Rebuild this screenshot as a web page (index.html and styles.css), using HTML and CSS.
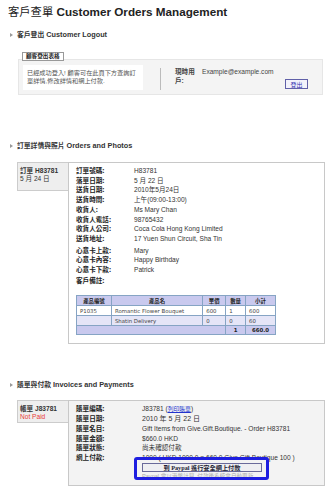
FILE: index.html
```html
<!DOCTYPE html>
<html lang="zh-Hant">
<head>
    <meta charset="UTF-8">
    <meta name="viewport" content="width=device-width, initial-scale=1.0">
    <title>客戶查單 Customer Orders Management</title>
    <link rel="stylesheet" href="styles.css">
</head>
<body>
    <h1 class="page-title"><span class="zh">客戶查單</span> Customer Orders Management</h1>

    <!-- Logout -->
    <h2 class="sec-head"><span class="zh">客戶登出</span> Customer Logout</h2>
    <div class="logout">
        <div class="logout-tab">顧客登出表格</div>
        <div class="logout-box">
            <p class="logout-msg">已經成功登入! 顧客可在此頁下方查詢訂單詳情,修改詳情和網上付款.</p>
            <div class="logout-user">
                <span class="user-label">現時用戶:</span>
                <span class="user-mail">Example@example.com</span>
                <button class="btn-logout">登出</button>
            </div>
        </div>
    </div>

    <!-- Orders -->
    <h2 class="sec-head sec-orders"><span class="zh">訂單詳情與照片</span> Orders and Photos</h2>
    <div class="record">
        <div class="record-tab order-tab">
            <b>訂單 H83781</b><br>5 月 24 日
        </div>
        <div class="record-body order-body">
            <div class="field"><span class="field-label">訂單號碼:</span><span>H83781</span></div>
            <div class="field"><span class="field-label">落單日期:</span><span>5 月 22 日</span></div>
            <div class="field"><span class="field-label">送貨日期:</span><span>2010年5月24日</span></div>
            <div class="field"><span class="field-label">送貨時間:</span><span>上午(09:00-13:00)</span></div>
            <div class="field"><span class="field-label">收貨人:</span><span>Ms Mary Chan</span></div>
            <div class="field"><span class="field-label">收貨人電話:</span><span>98765432</span></div>
            <div class="field"><span class="field-label">收貨人公司:</span><span>Coca Cola Hong Kong Limited</span></div>
            <div class="field"><span class="field-label">送貨地址:</span><span>17 Yuen Shun Circuit, Sha Tin</span></div>
            <div class="field group-start"><span class="field-label">心意卡上款:</span><span>Mary</span></div>
            <div class="field"><span class="field-label">心意卡內容:</span><span>Happy Birthday</span></div>
            <div class="field"><span class="field-label">心意卡下款:</span><span>Patrick</span></div>
            <div class="field note-row"><span class="field-label">客戶備註:</span><span></span></div>

            <table class="items">
                <tr>
                    <th class="col-code">產品編號</th>
                    <th class="col-name">產品名</th>
                    <th class="col-price">單價</th>
                    <th class="col-qty">數量</th>
                    <th class="col-sub">小計</th>
                </tr>
                <tr>
                    <td>P1035</td>
                    <td>Romantic Flower Bouquet</td>
                    <td>600</td>
                    <td>1</td>
                    <td>600</td>
                </tr>
                <tr class="alt">
                    <td></td>
                    <td>Shatin Delivery</td>
                    <td>0</td>
                    <td>0</td>
                    <td>60</td>
                </tr>
                <tr class="total">
                    <td colspan="3"></td>
                    <td>1</td>
                    <td>660.0</td>
                </tr>
            </table>
        </div>
    </div>

    <!-- Invoices -->
    <h2 class="sec-head sec-invoices"><span class="zh">賬單與付款</span> Invoices and Payments</h2>
    <div class="record">
        <div class="record-tab">
            <b>帳單 J83781</b><br><span class="not-paid">Not Paid</span>
        </div>
        <div class="record-body invoice-body">
            <div class="field"><span class="field-label">賬單編碼:</span><span>J83781 (<a href="#" class="print-link">列印賬單</a>)</span></div>
            <div class="field"><span class="field-label">賬單日期:</span><span class="big">2010 年 5 月 22 日</span></div>
            <div class="field"><span class="field-label">賬單名目:</span><span>Gift Items from Give.Gift.Boutique. - Order H83781</span></div>
            <div class="field"><span class="field-label">賬單金額:</span><span>$660.0 HKD</span></div>
            <div class="field"><span class="field-label">賬單狀態:</span><span>尚未確認付款</span></div>
            <div class="field"><span class="field-label">網上付款:</span>
                <div class="pay-cell">
                    <div>1000 ( HKD 1000.0 = 660.0 Give.Gift.Boutique 100 )</div>
                    <button class="btn-pay">到 Paypal 進行安全網上付款</button>
                    <div class="pay-note">Paypal 會以港幣計算, 付款後系統會自動更新</div>
                    <span class="highlight"></span>
                </div>
            </div>
        </div>
    </div>
</body>
</html>
```

FILE: styles.css
```css
* {
    margin: 0;
    padding: 0;
    box-sizing: border-box;
}

body {
    font-family: "Liberation Sans", Arial, "Noto Sans CJK TC", sans-serif;
    font-size: 6.6px;
    color: #333;
    background: #fff;
    padding: 3.5px 5px 0 8px;
}

.page-title {
    font-size: 11.7px;
    line-height: 15px;
    font-weight: bold;
    color: #222;
}

.page-title .zh {
    font-family: "Noto Sans CJK TC", sans-serif;
    font-weight: normal;
    font-size: 11.3px;
}

.sec-head {
    margin-top: 10.5px;
    font-size: 7.3px;
    line-height: 10px;
    font-weight: bold;
    color: #333;
}

.sec-head::before {
    content: "";
    display: inline-block;
    margin: 0 4px 0 2px;
    border-left: 3px solid #999;
    border-top: 2px solid transparent;
    border-bottom: 2px solid transparent;
    vertical-align: 0;
}

.sec-head .zh {
    font-family: "Noto Sans CJK TC", sans-serif;
    font-size: 6.8px;
}

.sec-orders {
    margin-top: 45px;
}

.sec-invoices {
    margin-top: 35px;
}

/* logout */
.logout {
    margin: 12px 0 0 10px;
    width: 305px;
}

.logout-tab {
    position: relative;
    z-index: 1;
    display: inline-block;
    margin: 0 0 -6px 4px;
    padding: 0 3px;
    height: 9px;
    line-height: 7px;
    background: #fff;
    border: 1px solid #999;
    font-family: "Noto Sans CJK TC", sans-serif;
    font-size: 5.6px;
    font-weight: bold;
    color: #222;
}

.logout-box {
    display: flex;
    height: 36px;
    padding: 5px 14px 4px 4px;
    background: #f4f4f4;
    border: 1px solid #e6e6e6;
}

.logout-msg {
    width: 120px;
    padding: 4px 4px 0 4px;
    background: #fff;
    line-height: 8px;
    font-size: 6.2px;
    color: #555;
}

.logout-user {
    flex: 1;
    display: flex;
    margin: 3px 0 0 17px;
    padding-left: 14px;
    border-left: 1px solid #bbb;
    line-height: 8.5px;
}

.user-label {
    width: 22px;
    font-weight: bold;
    color: #444;
}

.user-mail {
    margin-left: 5px;
    color: #444;
}

.btn-logout {
    margin-left: auto;
    align-self: flex-end;
    width: 23px;
    height: 10px;
    margin-bottom: 1px;
    background: #f2f2fb;
    border: 1px solid #6060a8;
    color: #3030b0;
    font-family: "Noto Sans CJK TC", sans-serif;
    font-size: 6px;
    line-height: 7px;
}

/* records */
.record {
    display: flex;
    margin: 11px 0 0 9px;
    width: 308px;
}

.sec-invoices + .record {
    margin-top: 10px;
}

.record-tab {
    align-self: flex-start;
    width: 51px;
    padding: 4px 2px 2px;
    background: #eee;
    border: 1px solid #ccc;
    border-right: none;
    line-height: 7.5px;
    color: #333;
}

.order-tab {
    padding-bottom: 7px;
    line-height: 8px;
}

.not-paid {
    color: #e83a3a;
}

.record-body {
    position: relative;
    flex: 1;
    padding: 3px 0 8px 7px;
    background: #fff;
    border: 1px solid #c8c8c8;
}

.field {
    display: flex;
    line-height: 9.7px;
}

.field-label {
    flex: none;
    width: 58px;
    font-family: "Noto Sans CJK TC", sans-serif;
    font-weight: bold;
    color: #222;
}

.field.group-start {
    margin-top: 2px;
}

.field.note-row {
    margin-top: 1px;
}

/* order items table */
.items {
    margin-top: 9.6px;
    width: 200px;
    border-collapse: collapse;
    font-family: "DejaVu Sans", Verdana, sans-serif;
    font-size: 5.4px;
    color: #444;
}

.items th,
.items td {
    height: 10px;
    padding: 0 3px;
    border: 1px solid #86a4c4;
    text-align: left;
    line-height: 8px;
}

.items th {
    background: #c9c9ee;
    text-align: center;
    font-family: "Noto Sans CJK TC", sans-serif;
    font-weight: bold;
    color: #222;
}

.items .col-code { width: 35px; }
.items .col-name { width: 92px; }
.items .col-price { width: 23px; }
.items .col-qty { width: 20px; }
.items .col-sub { width: 30px; }

.items tr.alt td {
    background: #e5e5f7;
}

.items tr.total td {
    height: 9px;
    background: #c9c9ee;
    font-weight: bold;
    text-align: center;
    color: #222;
}

/* invoice */
.invoice-body {
    padding: 2.5px 0 5px 7px;
    background: #f3f3f3;
}

.invoice-body .field-label {
    width: 66px;
}

.invoice-body .big {
    font-size: 7px;
}

.print-link {
    color: #2233cc;
    font-size: 5.8px;
}

.pay-cell {
    position: relative;
    flex: 1;
}

.btn-pay {
    display: block;
    width: 120px;
    height: 9px;
    background: #efeff2;
    border: 1px solid #6a6a9a;
    font-family: "Liberation Serif", "Noto Sans CJK TC", serif;
    font-size: 6.2px;
    font-weight: bold;
    line-height: 7px;
    color: #223;
}

.pay-note {
    line-height: 8px;
    color: #aaa;
    font-size: 5.6px;
}

.highlight {
    position: absolute;
    left: -8px;
    top: 4px;
    width: 135px;
    height: 23px;
    border: 3px solid #1e1ee0;
    border-radius: 3px;
}
```
